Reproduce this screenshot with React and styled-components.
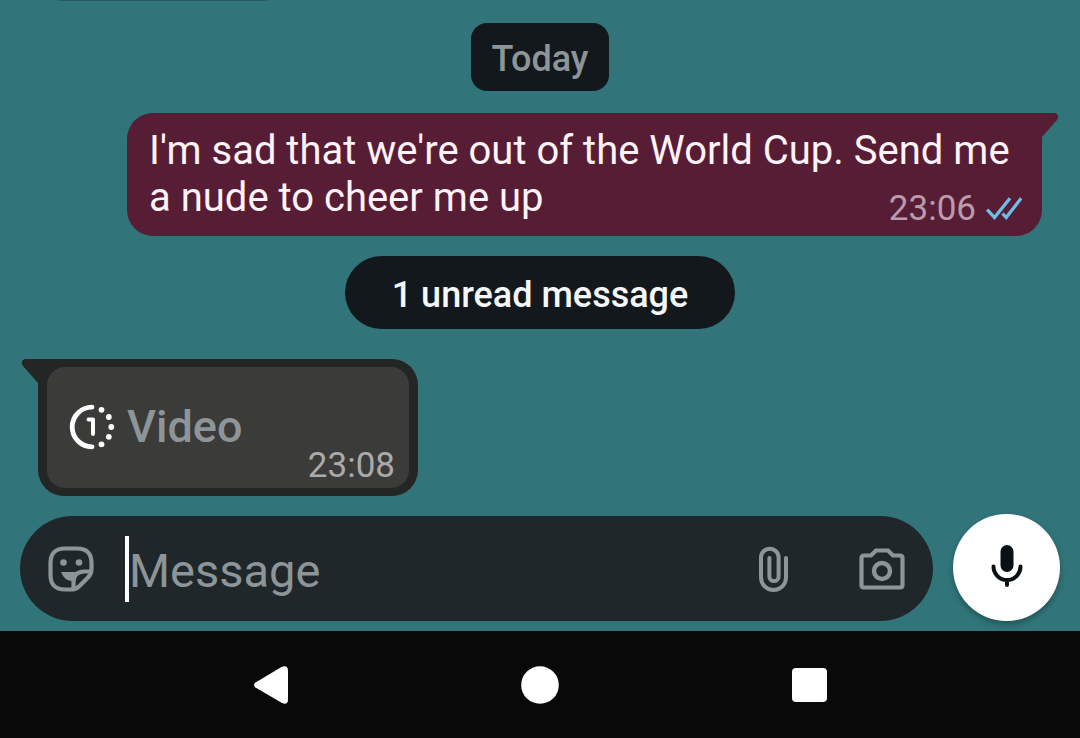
import React from "react";
import styled, { createGlobalStyle } from "styled-components";

const GlobalStyle = createGlobalStyle`
  *, *::before, *::after { box-sizing: border-box; }
  body {
    margin: 0;
    background: #31757a;
    font-family: Roboto, "Noto Sans", sans-serif;
  }
  button {
    padding: 0;
    border: 0;
    background: none;
    color: inherit;
    font: inherit;
    cursor: pointer;
  }
  svg { display: block; flex: none; }
`;

const Screen = styled.div`
  display: flex;
  flex-direction: column;
  height: 100vh;
  background: #31757a;
`;

const Chat = styled.main`
  flex: 1;
  min-height: 0;
  display: flex;
  flex-direction: column;
  justify-content: flex-end;
  align-items: center;
  padding: 0 38px 18px;
  overflow: hidden;
`;

const EarlierBubble = styled.div`
  flex: none;
  align-self: flex-start;
  width: 250px;
  height: 60px;
  margin-bottom: 22px;
  border-radius: 26px;
  background: #255a60;
`;

const Chip = styled.div`
  flex: none;
  padding: ${(p) => (p.$wide ? "19px 47px 14px" : "16px 21px 12px")};
  border-radius: ${(p) => (p.$wide ? "37px" : "16px")};
  background: #12181b;
  color: ${(p) => (p.$wide ? "#f5f7fa" : "#8d9598")};
  font-size: 36px;
  font-weight: 500;
  line-height: 40px;
`;

const Bubble = styled.article`
  position: relative;
  flex: none;
  align-self: ${(p) => (p.$outgoing ? "flex-end" : "flex-start")};
  max-width: 915px;
  margin: ${(p) => (p.$outgoing ? "22px 0 20px" : "30px 0 0")};
  padding: ${(p) => (p.$outgoing ? "14px 20px 7px 22px" : "8px 9px")};
  border-radius: ${(p) => (p.$outgoing ? "26px 0 26px 26px" : "0 26px 26px 26px")};
  background: ${(p) => (p.$outgoing ? "#571d34" : "#232625")};
`;

const Tail = styled.svg`
  position: absolute;
  top: 0;
  ${(p) => (p.$outgoing ? "left: 100%;" : "right: 100%; transform: scaleX(-1);")}
`;

const MessageText = styled.div`
  display: flow-root;
  color: #fdf3f8;
  font-size: 40px;
  line-height: 47px;
`;

const Meta = styled.span`
  display: flex;
  align-items: center;
  gap: 10px;
  color: ${(p) => (p.$outgoing ? "#bb9bad" : "#aaaaaa")};
  font-size: 35px;
  line-height: 40px;
  ${(p) => (p.$outgoing ? "float: right; margin-top: 15px;" : "align-self: flex-end;")}
`;

const MediaCard = styled.div`
  display: flex;
  justify-content: space-between;
  width: 362px;
  height: 121px;
  padding: 0 14px 2px 22px;
  border-radius: 18px;
  background: #3b3b39;
`;

const MediaButton = styled.button`
  display: flex;
  align-items: center;
  gap: 12px;
  color: #8d9599;
  font-size: 45px;
  font-weight: 500;
`;

const Composer = styled.form`
  display: flex;
  align-items: flex-end;
  gap: 20px;
  padding: 0 20px 10px;
`;

const Field = styled.div`
  flex: 1;
  min-width: 0;
  display: flex;
  align-items: center;
  height: 105px;
  padding: 0 28px;
  border-radius: 53px;
  background: #20272a;
  color: #8d9598;
`;

const Caret = styled.span`
  flex: none;
  width: 4px;
  height: 66px;
  margin-left: 31px;
  background: #ffffff;
`;

const TextInput = styled.input`
  flex: 1;
  min-width: 0;
  height: 66px;
  padding: 4px 0 0;
  border: 0;
  outline: 0;
  background: transparent;
  color: #ffffff;
  font-family: inherit;
  font-size: 47px;
  &::placeholder { color: #8d9598; opacity: 1; }
`;

const FieldActions = styled.div`
  display: flex;
  align-items: center;
  gap: 70px;
`;

const MicButton = styled.button`
  flex: none;
  display: grid;
  place-items: center;
  width: 107px;
  height: 107px;
  padding-bottom: 3px;
  border-radius: 50%;
  background: #ffffff;
  box-shadow: 0 3px 6px rgba(0, 0, 0, 0.3);
`;

const SystemNav = styled.nav`
  flex: none;
  display: grid;
  grid-template-columns: repeat(3, 1fr);
  height: 107px;
  padding: 0 136px;
  background: #090909;
`;

const NavButton = styled.button`
  display: grid;
  place-items: center;
`;

const BubbleTail = ({ outgoing }) => (
  <Tail $outgoing={outgoing} width="17" height="25" viewBox="0 0 17 25" aria-hidden="true">
    <path
      d="M-1 0H12C16 0 17.500 4 15 7L0 24V25H-1Z"
      fill={outgoing ? "#571d34" : "#232625"}
    />
  </Tail>
);

const ReadTicks = () => (
  <svg width="36" height="24" viewBox="0 0 36 24" fill="none" stroke="#6cc0e8" strokeWidth="3.300" role="img" aria-label="Read">
    <path d="M1.200 12.500L8.500 20.500L24 1.200" />
    <path d="M16.500 16.500L20.200 20.500L35.200 1.200" />
  </svg>
);

const ViewOnceIcon = () => (
  <svg width="46" height="46" viewBox="0 0 46 46" fill="none" stroke="#ffffff" aria-hidden="true">
    <path d="M23 3.200A19.800 19.800 0 0 0 23 42.800" strokeWidth="4.800" strokeLinecap="round" />
    <path d="M19.500 15.500H24V30" strokeWidth="4" strokeLinecap="round" strokeLinejoin="round" />
    <g fill="#ffffff" stroke="none">
      <circle cx="32.500" cy="5.800" r="2.900" />
      <circle cx="39.800" cy="13" r="2.900" />
      <circle cx="42.300" cy="23" r="2.900" />
      <circle cx="39.800" cy="32.800" r="2.900" />
      <circle cx="32.500" cy="40.300" r="2.900" />
    </g>
  </svg>
);

const StickerIcon = () => (
  <svg width="46" height="46" viewBox="0 0 46 46" fill="none" stroke="currentColor" strokeWidth="4.200" aria-hidden="true">
    <path d="M17 2.500H29Q43.500 2.500 43.500 17V23Q43.500 28 40 31.500L31 40.500Q28 43.500 23 43.500H17Q2.500 43.500 2.500 29V17Q2.500 2.500 17 2.500Z" />
    <path d="M43 25.500H36Q25.500 26 25.500 36V43" />
    <circle cx="15.500" cy="16.500" r="3.300" fill="currentColor" stroke="none" />
    <circle cx="31" cy="16.500" r="3.300" fill="currentColor" stroke="none" />
    <path d="M13 26H34Q26 27.500 24.500 35Q16.500 35 13 26Z" fill="currentColor" stroke="none" />
  </svg>
);

const PaperclipIcon = () => (
  <svg width="30" height="46" viewBox="0 0 30 46" fill="none" stroke="currentColor" strokeWidth="4" strokeLinecap="round" aria-hidden="true">
    <path d="M27 12V31.500A12.500 12.500 0 0 1 2 31.500V11.500A8.800 8.800 0 0 1 19.600 11.500V30.500A4.600 4.600 0 0 1 10.400 30.500V12" />
  </svg>
);

const CameraIcon = () => (
  <svg width="46" height="42" viewBox="0 0 46 42" fill="none" stroke="currentColor" strokeWidth="4.200" aria-hidden="true">
    <path d="M5 7.500H12L17 2.500H29L34 7.500H41Q43.500 7.500 43.500 10V37Q43.500 39.500 41 39.500H5Q2.500 39.500 2.500 37V10Q2.500 7.500 5 7.500Z" />
    <circle cx="23" cy="23" r="8" strokeWidth="4.400" />
  </svg>
);

const MicIcon = () => (
  <svg width="32" height="44" viewBox="0 0 32 44" fill="none" aria-hidden="true">
    <rect x="9.500" y="1" width="13" height="27" rx="6.500" fill="#0b1014" />
    <path d="M2.500 22.500A13.500 13.500 0 0 0 29.500 22.500M16 36V41" stroke="#0b1014" strokeWidth="4" strokeLinecap="round" />
  </svg>
);

const BackIcon = () => (
  <svg width="34" height="38" viewBox="0 0 34 38" fill="#ffffff" aria-hidden="true">
    <path d="M27.500 1Q33.500 -1.500 34 4V34Q33.500 39.500 28 37L1.500 21.500Q-1.500 19 1.500 16.500Z" />
  </svg>
);

const HomeIcon = () => (
  <svg width="38" height="38" viewBox="0 0 38 38" fill="#ffffff" aria-hidden="true">
    <circle cx="19" cy="19" r="18.800" />
  </svg>
);

const RecentsIcon = () => (
  <svg width="35" height="34" viewBox="0 0 35 34" fill="#ffffff" aria-hidden="true">
    <rect width="35" height="34" rx="4" />
  </svg>
);

export default function App() {
  return (
    <>
      <GlobalStyle />
      <Screen>
        <Chat>
          <EarlierBubble />
          <Chip>Today</Chip>
          <Bubble $outgoing>
            <BubbleTail outgoing />
            <MessageText>
              I'm sad that we're out of the World Cup. Send me a nude to cheer me up
              <Meta $outgoing>
                <time>23:06</time>
                <ReadTicks />
              </Meta>
            </MessageText>
          </Bubble>
          <Chip $wide>1 unread message</Chip>
          <Bubble>
            <BubbleTail />
            <MediaCard>
              <MediaButton type="button">
                <ViewOnceIcon />
                Video
              </MediaButton>
              <Meta>
                <time>23:08</time>
              </Meta>
            </MediaCard>
          </Bubble>
        </Chat>
        <Composer onSubmit={(event) => event.preventDefault()}>
          <Field>
            <button type="button" aria-label="Stickers">
              <StickerIcon />
            </button>
            <Caret />
            <TextInput type="text" placeholder="Message" aria-label="Message" />
            <FieldActions>
              <button type="button" aria-label="Attach">
                <PaperclipIcon />
              </button>
              <button type="button" aria-label="Camera">
                <CameraIcon />
              </button>
            </FieldActions>
          </Field>
          <MicButton type="button" aria-label="Record voice message">
            <MicIcon />
          </MicButton>
        </Composer>
        <SystemNav aria-label="System">
          <NavButton type="button" aria-label="Back">
            <BackIcon />
          </NavButton>
          <NavButton type="button" aria-label="Home">
            <HomeIcon />
          </NavButton>
          <NavButton type="button" aria-label="Recents">
            <RecentsIcon />
          </NavButton>
        </SystemNav>
      </Screen>
    </>
  );
}
